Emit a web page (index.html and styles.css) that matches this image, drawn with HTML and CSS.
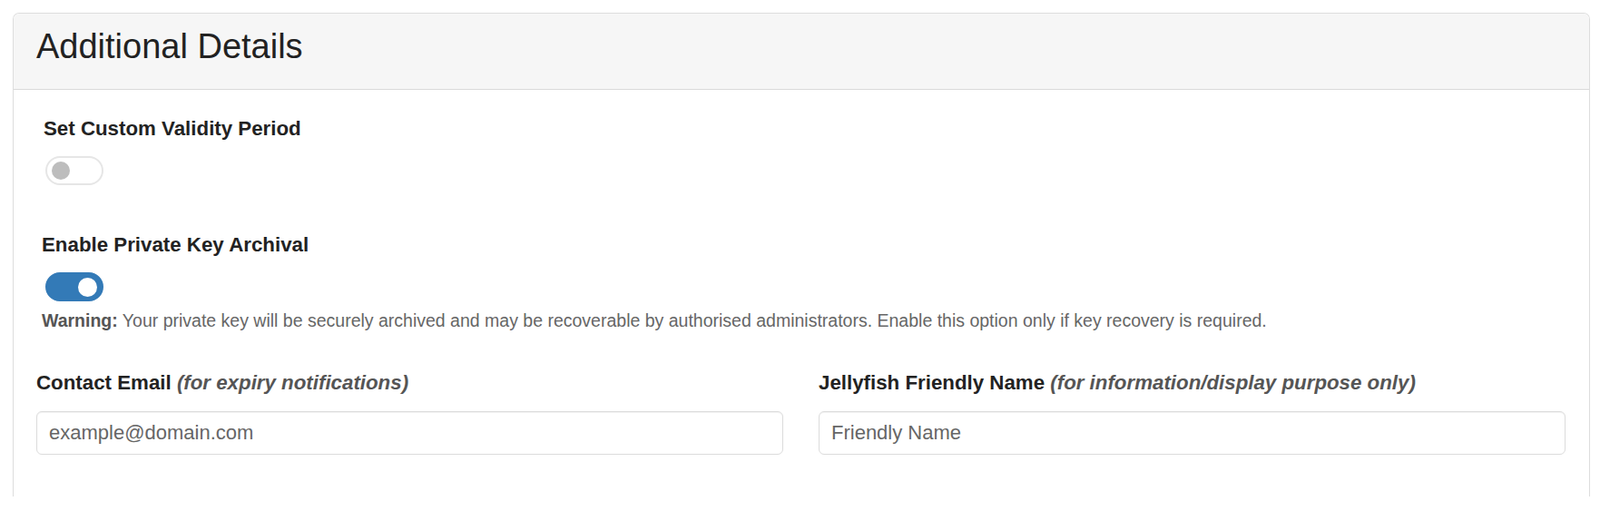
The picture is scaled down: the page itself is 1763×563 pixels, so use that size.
FILE: index.html
```html
<!DOCTYPE html>
<html lang="en">
<head>
    <meta charset="UTF-8">
    <meta name="viewport" content="width=device-width, initial-scale=1.0">
    <title>Additional Details</title>
    <link rel="stylesheet" href="styles.css">
</head>
<body>

<div class="panel">
    <div class="panel-heading">
        <h3 class="panel-title">Additional Details</h3>
    </div>
    <div class="panel-body">
        <div class="switch-group first">
            <label class="switch-label" for="customValidity">Set Custom Validity Period</label>
            <label class="switch">
                <input type="checkbox" id="customValidity">
                <span class="knob"></span>
            </label>
        </div>

        <div class="switch-group">
            <label class="switch-label" for="keyArchival">Enable Private Key Archival</label>
            <label class="switch on">
                <input type="checkbox" id="keyArchival" checked>
                <span class="knob"></span>
            </label>
            <p class="help-text"><strong>Warning:</strong> Your private key will be securely archived and may be recoverable by authorised administrators. Enable this option only if key recovery is required.</p>
        </div>

        <div class="row">
            <div class="form-group">
                <label for="contactEmail">Contact Email <em>(for expiry notifications)</em></label>
                <input type="email" id="contactEmail" class="form-control" placeholder="example@domain.com">
            </div>
            <div class="form-group">
                <label for="friendlyName">Jellyfish Friendly Name <em>(for information/display purpose only)</em></label>
                <input type="text" id="friendlyName" class="form-control" placeholder="Friendly Name">
            </div>
        </div>
    </div>
</div>

</body>
</html>
```

FILE: styles.css
```css
/* Panel */
body { margin: 0; padding: 0; background-color: #fff; font-family: 'Liberation Sans', Arial, sans-serif; color: #222; }
.panel { margin: 14px 11px 0 14px; border: 1px solid #ddd; border-bottom: none; border-radius: 7px 7px 0 0; }
.panel-heading { padding: 15px 25px 26px; background-color: #f6f6f6; border-bottom: 1px solid #dadada; border-radius: 6px 6px 0 0; }
.panel-title { margin: 0; font-size: 38px; line-height: 42px; font-weight: normal; color: #222; }
.panel-body { padding: 30px 26px 46px 25px; }

/* Switches */
.switch-group { padding-left: 6px; margin-top: 53px; }
.switch-group.first { margin-top: 0; }
.switch-group.first .switch-label { padding-left: 2px; }
.switch-label { display: block; font-size: 22.3px; line-height: 26px; font-weight: bold; color: #222; margin-bottom: 17px; }
.switch { display: flex; align-items: center; box-sizing: border-box; width: 64px; height: 32px; margin-left: 4px; padding: 0 5px; border: 2px solid #e6e6e6; border-radius: 16px; background-color: #fff; cursor: pointer; }
.switch input { display: none; }
.switch .knob { width: 20px; height: 20px; border-radius: 50%; background-color: #bdbdbd; }
.switch.on { justify-content: flex-end; background-color: #337ab7; border-color: #337ab7; }
.switch.on .knob { width: 21px; height: 21px; background-color: #fff; }
.help-text { margin: 10px 0 0; font-size: 19.5px; line-height: 22px; color: #666; }
.help-text strong { color: #555; }

/* Inputs */
.row { display: grid; grid-template-columns: 1fr 1fr; column-gap: 39px; margin-top: 45px; }
.form-group label { display: block; font-size: 22.3px; line-height: 26px; font-weight: bold; color: #222; margin-bottom: 17.6px; }
.form-group label em { color: #555; }
.form-control { display: block; box-sizing: border-box; width: 100%; height: 48px; padding: 0 13px; font-family: 'Liberation Sans', Arial, sans-serif; font-size: 22px; color: #555; border: 1px solid #dcdcdc; border-radius: 6px; box-shadow: inset 0 1px 1px rgba(0, 0, 0, 0.06); background-color: #fff; }
.form-control::placeholder { color: #666; }
```
